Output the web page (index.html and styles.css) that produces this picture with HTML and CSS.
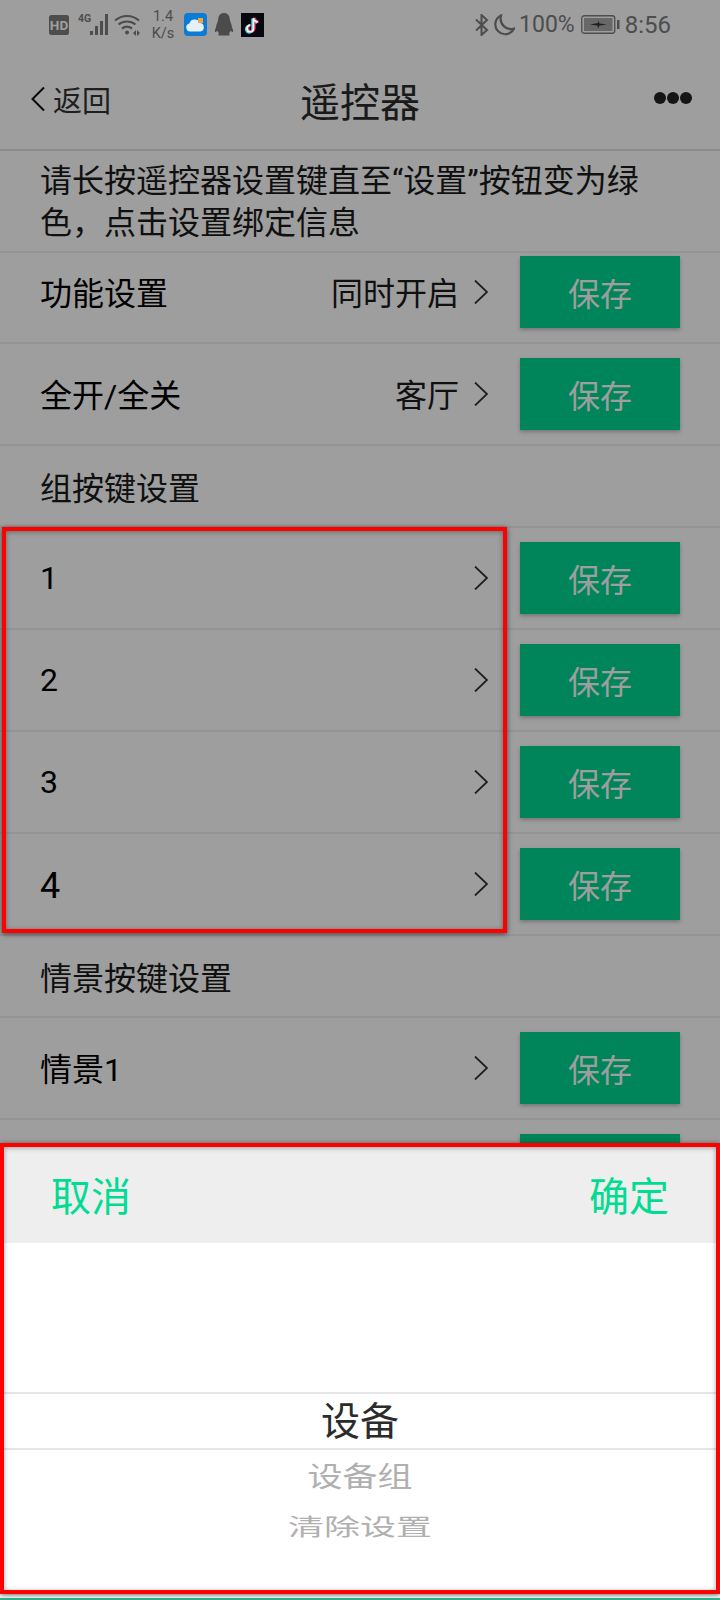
FILE: index.html
```html
<!DOCTYPE html>
<html lang="zh-CN">
<head>
  <meta charset="UTF-8">
  <meta name="viewport" content="width=device-width, initial-scale=1.0">
  <title>遥控器</title>
  <link rel="stylesheet" href="styles.css">
</head>
<body>
  <div class="screen">
    <div class="statusbar">
      <div class="status-left">
        <svg class="ic-hd" width="20" height="20" viewBox="0 0 20 20"><rect width="20" height="20" rx="2.5" fill="#7c7c7c"/><text x="10" y="14.8" text-anchor="middle" class="hd-text">HD</text></svg>
        <svg class="ic-signal" width="34" height="24" viewBox="0 0 34 24">
          <text x="0" y="9" class="net-text">4G</text>
          <g fill="#7c7c7c">
            <rect x="12" y="18" width="3" height="4"/>
            <rect x="17" y="13" width="3" height="9"/>
            <rect x="22" y="8" width="3" height="14"/>
            <rect x="27" y="1" width="3" height="21"/>
          </g>
        </svg>
        <svg class="ic-wifi" width="26" height="22" viewBox="0 0 26 22" fill="none" stroke="#7c7c7c" stroke-width="2.2">
          <path d="M1 6.5C8 .5 18 .5 25 6.5"/>
          <path d="M4.5 10.5c5-4 12-4 17 0"/>
          <path d="M8 14.5c3-2.2 7-2.2 10 0"/>
          <circle cx="13" cy="18.5" r="2" fill="#7c7c7c" stroke="none"/>
          <path d="M19 19l3-3v6zM23 16l3 3-3 3z" fill="#7c7c7c" stroke="none"/>
        </svg>
        <div class="speed">1.4<br>K/s</div>
      </div>
      <div class="status-apps">
        <svg width="23" height="23" viewBox="0 0 23 23">
          <rect width="23" height="23" rx="4" fill="#0b7bd6"/>
          <path d="M6 18.500a4 4 0 0 1-.6-7.900 5.500 5.500 0 0 1 10.400-.6 4.300 4.300 0 0 1 .6 8.500z" fill="#e4f0fa"/>
          <rect x="14" y="5" width="5" height="5" fill="#f2a73b"/>
        </svg>
        <svg width="20" height="23" viewBox="0 0 20 23">
          <path d="M10 0c4 0 5.800 3 5.800 6.500 0 1.500 2.200 5 2.200 8 1 2 1.500 4 .8 4.500-.7.400-1.500-.6-2-1.500-.3 1.200-1 2-2 2.700 1.200.500 1.500 1.800 0 2.300H5.200c-1.500-.5-1.200-1.800 0-2.300-1-.7-1.700-1.500-2-2.700-.5.900-1.300 1.900-2 1.500-.7-.5-.2-2.500.8-4.500 0-3 2.200-6.500 2.200-8C4.200 3 6 0 10 0z" fill="#4b4b4b"/>
        </svg>
        <svg width="23" height="24" viewBox="0 0 24 24" preserveAspectRatio="none">
          <rect width="24" height="24" fill="#06070f"/>
          <g fill="none" stroke-width="2.6">
            <path d="M13 5v10.500a3.300 3.300 0 1 1-3.500-3.300M13 5c.5 2.500 2 3.800 4.500 4.200" stroke="#25e6e6" transform="translate(-1 .6)"/>
            <path d="M13 5v10.500a3.300 3.300 0 1 1-3.500-3.300M13 5c.5 2.500 2 3.800 4.500 4.200" stroke="#f0255a" transform="translate(1 -.2)"/>
            <path d="M13 5v10.500a3.300 3.300 0 1 1-3.500-3.300M13 5c.5 2.500 2 3.800 4.500 4.200" stroke="#f4f4f4" stroke-width="1.8"/>
          </g>
        </svg>
      </div>
      <div class="status-right">
        <svg width="14" height="22" viewBox="0 0 14 22" fill="none" stroke="#7c7c7c" stroke-width="2"><path d="M1 5.500l11 10.500-5.500 5V1L12 6 1 16.500"/></svg>
        <svg class="ic-moon" width="22" height="22" viewBox="0 0 22 22" fill="none" stroke="#7c7c7c" stroke-width="2.200"><path d="M8 1.500a9.800 9.800 0 1 0 13 13C13 17 6 10 8 1.500z"/></svg>
        <span class="battery-pct">100%</span>
        <svg class="ic-battery" width="39" height="19" viewBox="0 0 39 19">
          <rect x=".75" y=".75" width="33" height="17.500" rx="2.500" fill="none" stroke="#7c7c7c" stroke-width="1.300"/>
          <rect x="3" y="3" width="28.500" height="13" fill="#a8a8a8"/>
          <path d="M9 9.500l8-1.500 0-2.500 1.500 3 7.500 1-7.500 1-1.500 3-.5-3z" fill="#333"/>
          <rect x="36" y="5" width="2.500" height="9" fill="#7c7c7c"/>
        </svg>
        <span class="clock">8:56</span>
      </div>
    </div>

    <header class="navbar">
      <div class="nav-back">
        <svg width="16" height="26" viewBox="0 0 16 26" fill="none" stroke="#111" stroke-width="2"><path d="M14 1.500L2.500 13 14 24.500"/></svg>
        <span>返回</span>
      </div>
      <h1 class="nav-title">遥控器</h1>
      <div class="nav-more"><i></i><i></i><i></i></div>
    </header>

    <p class="notice">请长按遥控器设置键直至“设置”按钮变为绿色，点击设置绑定信息</p>

    <div class="row row-first">
      <span class="row-label row-label-cn">功能设置</span>
      <span class="row-value">同时开启</span>
      <svg class="chevron" width="14" height="24" viewBox="0 0 14 24"><path d="M1 .5L13 12 1 23.500"/></svg>
      <div class="save-btn">保存</div>
    </div>
    <div class="row">
      <span class="row-label row-label-cn">全开/全关</span>
      <span class="row-value">客厅</span>
      <svg class="chevron" width="14" height="24" viewBox="0 0 14 24"><path d="M1 .5L13 12 1 23.500"/></svg>
      <div class="save-btn">保存</div>
    </div>

    <div class="section-title">组按键设置</div>
    <div class="row">
      <span class="row-label">1</span>
      <svg class="chevron" width="14" height="24" viewBox="0 0 14 24"><path d="M1 .5L13 12 1 23.500"/></svg>
      <div class="save-btn">保存</div>
    </div>
    <div class="row">
      <span class="row-label">2</span>
      <svg class="chevron" width="14" height="24" viewBox="0 0 14 24"><path d="M1 .5L13 12 1 23.500"/></svg>
      <div class="save-btn">保存</div>
    </div>
    <div class="row">
      <span class="row-label">3</span>
      <svg class="chevron" width="14" height="24" viewBox="0 0 14 24"><path d="M1 .5L13 12 1 23.500"/></svg>
      <div class="save-btn">保存</div>
    </div>
    <div class="row">
      <span class="row-label row-label-big">4</span>
      <svg class="chevron" width="14" height="24" viewBox="0 0 14 24"><path d="M1 .5L13 12 1 23.500"/></svg>
      <div class="save-btn">保存</div>
    </div>

    <div class="section-title">情景按键设置</div>
    <div class="row">
      <span class="row-label row-label-cn">情景1</span>
      <svg class="chevron" width="14" height="24" viewBox="0 0 14 24"><path d="M1 .5L13 12 1 23.500"/></svg>
      <div class="save-btn">保存</div>
    </div>
    <!-- next row is covered by the sheet, only the top of its button shows -->
    <div class="row">
      <span class="row-label"></span>
      <div class="save-btn"></div>
    </div>

    <div class="mask"></div>

    <div class="sheet">
      <div class="sheet-head">
        <span>取消</span>
        <span>确定</span>
      </div>
      <div class="picker">
        <div class="picker-current">设备</div>
        <div class="picker-item picker-near">设备组</div>
        <div class="picker-item picker-far">清除设置</div>
      </div>
    </div>

    <div class="mark mark-rows"></div>
    <div class="mark mark-sheet"></div>
    <div class="bottom-edge"></div>
  </div>
</body>
</html>
```

FILE: styles.css
```css
* {
  box-sizing: border-box;
  margin: 0;
  padding: 0;
}

body {
  font-family: "Noto Sans CJK SC", "Noto Sans", sans-serif;
  background: #fff;
  color: #000;
}

.screen {
  position: relative;
  width: 720px;
  height: 1600px;
  overflow: hidden;
  background: #fff;
}

/* status bar */
.statusbar {
  height: 50px;
  display: flex;
  align-items: center;
  padding: 0 49px 1px 49px;
  color: #7c7c7c;
  font-family: Roboto, sans-serif;
}

.status-left {
  display: flex;
  align-items: center;
}

.ic-signal {
  margin-left: 9px;
}

.ic-wifi {
  margin-left: 2px;
}

.hd-text {
  font-family: Roboto, sans-serif;
  font-size: 13.5px;
  font-weight: 700;
  fill: #fff;
}

.net-text {
  font-family: Roboto, sans-serif;
  font-size: 10.5px;
  font-weight: 700;
  fill: #7c7c7c;
}

.speed {
  width: 26px;
  margin-left: 10px;
  font-size: 14.5px;
  line-height: 17px;
  text-align: center;
}

.status-apps {
  position: relative;
  z-index: 2;
  display: flex;
  align-items: center;
  gap: 7px;
  margin-left: 8px;
}

.status-right {
  margin-left: auto;
  display: flex;
  align-items: center;
}

.ic-moon {
  margin-left: 4px;
}

.battery-pct {
  margin-left: 4px;
  font-size: 23px;
}

.ic-battery {
  margin-left: 6px;
}

.clock {
  margin-left: 5px;
  font-size: 24px;
}

/* nav */
.navbar {
  position: relative;
  height: 101px;
  display: flex;
  align-items: center;
  justify-content: center;
  border-bottom: 2px solid #e2e2e2;
}

.nav-back {
  position: absolute;
  left: 30px;
  top: 33px;
  display: flex;
  align-items: center;
  gap: 7px;
  font-size: 29px;
  line-height: 32px;
  color: #333;
}

.nav-title {
  font-size: 40px;
  font-weight: 400;
  color: #2a2a2a;
  line-height: 100px;
}

.nav-more {
  position: absolute;
  right: 28px;
  top: 42px;
  display: flex;
  gap: 1px;
}

.nav-more i {
  width: 12px;
  height: 12px;
  border-radius: 50%;
  background: #222;
}

/* list */
.notice {
  height: 102px;
  padding: 9px 60px 0 40px;
  font-family: Roboto, "Noto Sans CJK SC", sans-serif;
  font-size: 32px;
  line-height: 42px;
  color: #1a1a1a;
  border-bottom: 2px solid #efefef;
}

.row {
  height: 102px;
  display: flex;
  align-items: center;
  padding: 0 40px;
  border-bottom: 2px solid #efefef;
  font-size: 32px;
  color: #1a1a1a;
}

.row-first {
  height: 91px;
  padding-bottom: 11px;
}

.row-label {
  flex: 1;
  font-family: Roboto, "Noto Sans CJK SC", sans-serif;
  color: #000;
}

.row-label-cn,
.row-value {
  padding-bottom: 3px;
}

.row-label-big {
  font-size: 36px;
  line-height: 52px;
  padding-top: 3px;
}

.row-value {
  margin-right: 15px;
}

.chevron {
  flex: none;
  fill: none;
  stroke: #333;
  stroke-width: 1.8;
}

.save-btn {
  flex: none;
  width: 160px;
  height: 72px;
  margin-left: 32px;
  background: #00d690;
  color: #fff;
  font-size: 32px;
  line-height: 72px;
  text-align: center;
  box-shadow: 0 2px 4px rgba(0, 0, 0, 0.25);
}

.section-title {
  height: 82px;
  padding-left: 40px;
  font-size: 32px;
  line-height: 80px;
  color: #1a1a1a;
  border-bottom: 2px solid #efefef;
}

/* dim layer and picker */
.mask {
  position: absolute;
  inset: 0;
  z-index: 1;
  background: rgba(0, 0, 0, 0.38);
}

.sheet {
  position: absolute;
  left: 0;
  right: 0;
  bottom: 2px;
  height: 454px;
  z-index: 3;
  background: #fff;
}

.sheet-head {
  height: 99px;
  display: flex;
  align-items: center;
  justify-content: space-between;
  padding: 0 51px;
  background: #eee;
  color: #00dc92;
  font-size: 40px;
}

.picker {
  padding-top: 149px;
  text-align: center;
}

.picker-current {
  height: 58px;
  border-top: 2px solid #e6e6e6;
  border-bottom: 2px solid #e6e6e6;
  font-size: 39px;
  line-height: 48px;
  color: #2b2b2b;
}

.picker-item {
  height: 50px;
  font-size: 35px;
  line-height: 50px;
  color: #b0b0b0;
}

.picker-near {
  transform: scaleY(0.8);
}

.picker-far {
  font-size: 36px;
  transform: scaleY(0.64);
}

/* red annotation boxes */
.mark {
  position: absolute;
  z-index: 4;
  border: 4px solid #f00;
  box-shadow: 0 1px 5px rgba(0, 0, 0, 0.6), inset 0 1px 5px rgba(0, 0, 0, 0.35);
}

.mark-rows {
  left: 2px;
  top: 527px;
  width: 505px;
  height: 406px;
}

.mark-sheet {
  left: 0;
  top: 1143px;
  width: 720px;
  height: 451px;
}

.bottom-edge {
  position: absolute;
  z-index: 3;
  left: 0;
  right: 0;
  bottom: 0;
  height: 2px;
  background: #2fb48c;
}
```
